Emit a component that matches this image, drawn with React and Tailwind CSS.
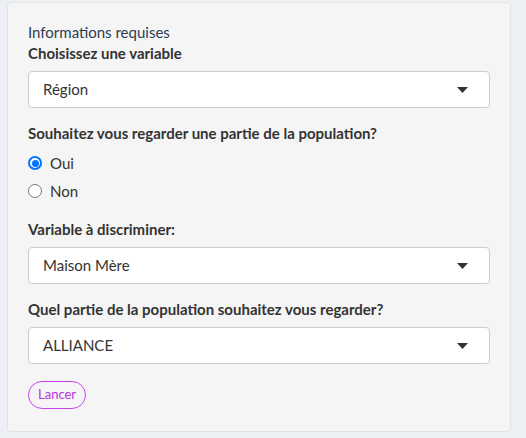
import { useState } from 'react'

const Caret = () => (
  <svg width="11" height="6" viewBox="0 0 11 6" className="shrink-0">
    <path d="M0 0 L11 0 L5.5 6 Z" fill="#333" />
  </svg>
)

const Select = ({ value }) => (
  <div className="flex h-[37px] items-center justify-between rounded-[4px] border border-[#cccccc] bg-white pl-[14px] pr-[21px] text-[15px] text-[#333]">
    <span>{value}</span>
    <Caret />
  </div>
)

const Label = ({ children }) => (
  <div className="text-[15px] font-bold leading-[21px] text-[#333]">{children}</div>
)

const Radio = ({ checked, label }) => (
  <label className="flex h-[28px] items-center gap-[8px] text-[15px] text-[#333]">
    {checked ? (
      <span className="flex h-[14px] w-[14px] items-center justify-center rounded-full border-[2px] border-[#0075ff] bg-white">
        <span className="h-[7px] w-[7px] rounded-full bg-[#0075ff]" />
      </span>
    ) : (
      <span className="h-[14px] w-[14px] rounded-full border border-[#767676] bg-white" />
    )}
    <span>{label}</span>
  </label>
)

export default function App() {
  const [choice] = useState('Oui')

  return (
    <div className="h-[438px] w-[526px] bg-[#ecf0f5] pl-[7px] pt-[2px]" style={{ fontFamily: 'Lato, "Open Sans", sans-serif' }}>
      <div className="w-[504px] rounded-[4px] border border-[#e3e3e3] bg-[#f5f5f5] px-[20px] pb-[22px] pt-[19px]">
        <div className="text-[15px] leading-[21px] text-[#2c3e50]">Informations requises</div>
        <Label>Choisissez une variable</Label>
        <div className="mt-[7px]">
          <Select value="Région" />
        </div>

        <div className="mt-[15px]">
          <Label>Souhaitez vous regarder une partie de la population?</Label>
          <div className="mt-[5px]">
            <Radio checked={choice === 'Oui'} label="Oui" />
            <Radio checked={choice === 'Non'} label="Non" />
          </div>
        </div>

        <div className="mt-[14px]">
          <Label>Variable à discriminer:</Label>
          <div className="mt-[7px]">
            <Select value="Maison Mère" />
          </div>
        </div>

        <div className="mt-[15px]">
          <Label>Quel partie de la population souhaitez vous regarder?</Label>
          <div className="mt-[7px]">
            <Select value="ALLIANCE" />
          </div>
        </div>

        <button className="mt-[17px] h-[28px] rounded-full border border-[#cc44ee] px-[9px] text-[13px] text-[#b733e0]">
          Lancer
        </button>
      </div>
    </div>
  )
}
